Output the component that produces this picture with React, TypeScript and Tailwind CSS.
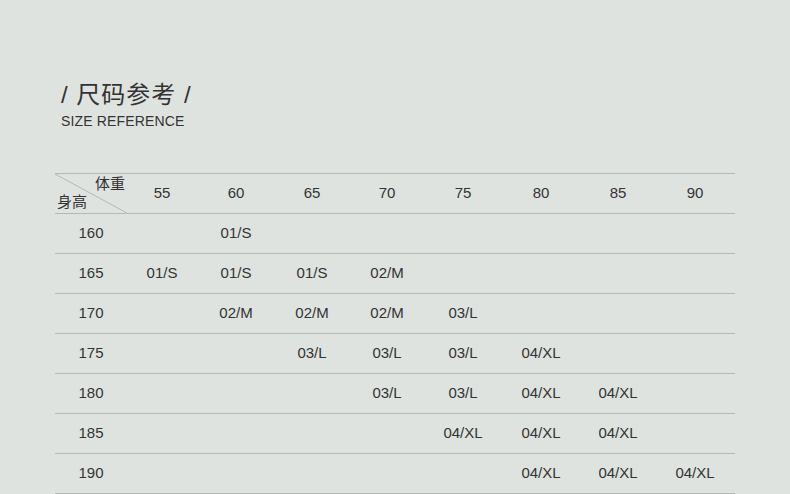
import React from "react";

const cols = ["55", "60", "65", "70", "75", "80", "85", "90"];
const rows: [string, Record<string, string>][] = [
  ["160", { "60": "01/S" }],
  ["165", { "55": "01/S", "60": "01/S", "65": "01/S", "70": "02/M" }],
  ["170", { "60": "02/M", "65": "02/M", "70": "02/M", "75": "03/L" }],
  ["175", { "65": "03/L", "70": "03/L", "75": "03/L", "80": "04/XL" }],
  ["180", { "70": "03/L", "75": "03/L", "80": "04/XL", "85": "04/XL" }],
  ["185", { "75": "04/XL", "80": "04/XL", "85": "04/XL" }],
  ["190", { "80": "04/XL", "85": "04/XL", "90": "04/XL" }],
];

const grid = "grid grid-cols-[72px_70px_78px_74px_76px_76px_80px_74px_80px] h-[40px] border-b border-[#b4b8b6] items-center";

export default function App() {
  return (
    <div
      className="w-[790px] h-[494px] bg-[#dfe3e0] text-[#333] overflow-hidden"
      style={{ fontFamily: '"Liberation Sans", "Noto Sans CJK SC", sans-serif' }}
    >
      <div className="pt-[79px] pl-[61px]">
        <div className="h-[32px] leading-[32px] text-[24px] tracking-[1px] text-[#333]">/ 尺码参考 /</div>
        <div className="h-[20px] leading-[20px] text-[14px] tracking-[0.15px] text-[#333]">SIZE REFERENCE</div>
      </div>
      <div className="ml-[55px] w-[680px] mt-[42px] border-t border-[#b4b8b6]">
        <div className={grid}>
          <div className="relative h-full">
            <svg className="absolute inset-0" width="72" height="39" viewBox="0 0 72 39">
              <line x1="0" y1="0" x2="72" y2="39" stroke="#b4b8b6" strokeWidth="1" />
            </svg>
            <span className="absolute left-[40px] top-[1px] text-[15px] leading-[18px]">体重</span>
            <span className="absolute left-[2px] top-[19px] text-[15px] leading-[18px]">身高</span>
          </div>
          {cols.map((c) => (
            <div key={c} className="text-center text-[15px]">{c}</div>
          ))}
        </div>
        {rows.map(([h, m]) => (
          <div key={h} className={grid}>
            <div className="text-center text-[15px]">{h}</div>
            {cols.map((c) => (
              <div key={c} className="text-center text-[15px]">{m[c] ?? ""}</div>
            ))}
          </div>
        ))}
      </div>
    </div>
  );
}
